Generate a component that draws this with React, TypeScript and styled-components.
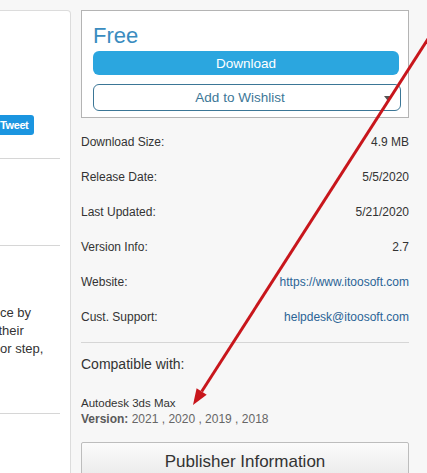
import React from "react";
import styled, { createGlobalStyle } from "styled-components";

const Global = createGlobalStyle`
  html, body { margin: 0; padding: 0; overflow: hidden; background: #f7f7f7; }
  body { font-family: "Liberation Sans", Arial, sans-serif; color: #333; }
  * { box-sizing: border-box; }
`;

const Page = styled.div`
  position: relative;
  display: flex;
  align-items: stretch;
  gap: 10px;
  padding-top: 10px;
  width: 427px;
  min-height: 473px;
`;

/* ---------- left card ---------- */
const LeftCard = styled.aside`
  flex: none;
  width: 71px;
  min-height: 520px;
  background: #fff;
  border: 1px solid #dcdcdc;
  border-left: none;
  border-radius: 0 4px 0 0;
  padding-right: 10px;
  display: flex;
  flex-direction: column;
`;

const SocialRow = styled.div`
  margin-top: 104px;
  display: flex;
`;

const TweetButton = styled.a`
  display: inline-flex;
  align-items: center;
  gap: 3px;
  height: 20px;
  margin-left: -20px;
  padding: 0 6px 0 5px;
  background: #1b95e0;
  color: #fff;
  border-radius: 3px;
  font: bold 11px "Liberation Sans", Arial, sans-serif;
  letter-spacing: -0.4px;
  text-decoration: none;
`;

const Divider = styled.hr<{ $top: number }>`
  margin: ${(p) => p.$top}px 0 0;
  border: none;
  border-top: 1px solid #d6d6d6;
  height: 0;
  width: 100%;
`;

const Para = styled.div`
  margin-top: 58px;
  font-size: 13px;
  line-height: 18px;
  color: #333;
`;

const ParaLine = styled.div<{ $shift?: number }>`
  white-space: nowrap;
  margin-left: ${(p) => p.$shift ?? 0}px;
`;

/* ---------- right column ---------- */
const RightColumn = styled.main`
  flex: none;
  width: 328px;
  display: flex;
  flex-direction: column;
`;

const PriceBox = styled.section`
  background: #fff;
  border: 1px solid #b4b4b4;
  padding: 12px 7px 6px 11px;
  display: flex;
  flex-direction: column;
`;

const Price = styled.div`
  font-size: 22px;
  line-height: 26px;
  color: #3a8cbf;
`;

const DownloadButton = styled.button`
  margin: 2px 2px 0 0;
  height: 24px;
  border: none;
  border-radius: 6px;
  background: #2ba6df;
  color: #fff;
  font: 13.5px "Liberation Sans", Arial, sans-serif;
  cursor: pointer;
`;

const WishlistButton = styled.button`
  position: relative;
  margin-top: 9px;
  height: 27px;
  border: 1px solid #3b7696;
  border-radius: 6px;
  background: #fff;
  color: #3d7797;
  font: 13.5px "Liberation Sans", Arial, sans-serif;
  padding: 0 14px 0 0;
  cursor: pointer;
`;

const Caret = styled.span`
  position: absolute;
  right: 8px;
  top: 11px;
  width: 0;
  height: 0;
  border-left: 4px solid transparent;
  border-right: 4px solid transparent;
  border-top: 5px solid #555;
`;

const InfoList = styled.dl`
  margin: 6px 0 0;
  display: flex;
  flex-direction: column;
`;

const InfoRow = styled.div`
  height: 35px;
  display: flex;
  align-items: center;
  justify-content: space-between;
  font-size: 12px;
  color: #333;
`;

const Label = styled.dt`
  margin: 0;
`;

const Value = styled.dd`
  margin: 0;
`;

const LinkValue = styled.a`
  color: #2b6496;
  text-decoration: none;
`;

const CompatTitle = styled.div`
  margin-top: 11px;
  font-size: 14px;
  line-height: 20px;
  color: #333;
`;

const Product = styled.div`
  margin-top: 21px;
  font-size: 11.5px;
  line-height: 16px;
  color: #333;
`;

const Versions = styled.div`
  font-size: 12px;
  line-height: 16px;
  color: #666;
  b { color: #5a5a5a; }
`;

const PublisherButton = styled.button`
  margin-top: 15px;
  height: 40px;
  border: 1px solid #bdbdbd;
  border-radius: 2px;
  background: linear-gradient(#fbfbfb, #e8e8e8);
  color: #333;
  font: 17px "Liberation Sans", Arial, sans-serif;
  padding: 0;
`;

const Overlay = styled.svg`
  position: absolute;
  left: 0;
  top: 0;
  pointer-events: none;
`;

const rows: { label: string; value: string; link?: boolean }[] = [
  { label: "Download Size:", value: "4.9 MB" },
  { label: "Release Date:", value: "5/5/2020" },
  { label: "Last Updated:", value: "5/21/2020" },
  { label: "Version Info:", value: "2.7" },
  { label: "Website:", value: "https://www.itoosoft.com", link: true },
  { label: "Cust. Support:", value: "helpdesk@itoosoft.com", link: true },
];

export default function App() {
  return (
    <>
      <Global />
      <Page>
        <LeftCard>
          <SocialRow>
            <TweetButton href="#">
              <svg width="12" height="10" viewBox="0 0 24 20" fill="#fff">
                <path d="M24 2.4a9.8 9.8 0 0 1-2.8.8A4.9 4.9 0 0 0 23.3.4a9.9 9.9 0 0 1-3.1 1.2A4.9 4.9 0 0 0 11.8 6 14 14 0 0 1 1.7.9a4.9 4.9 0 0 0 1.5 6.6A4.9 4.9 0 0 1 1 6.9v.1a4.9 4.9 0 0 0 3.9 4.8 4.9 4.9 0 0 1-2.2.1 4.9 4.9 0 0 0 4.6 3.4A9.9 9.9 0 0 1 0 17.3 14 14 0 0 0 7.5 19.5c9.1 0 14-7.5 14-14v-.6A10 10 0 0 0 24 2.4z" />
              </svg>
              Tweet
            </TweetButton>
          </SocialRow>
          <Divider $top={23} />
          <Divider $top={86} />
          <Para>
            <ParaLine>ce by</ParaLine>
            <ParaLine $shift={-1.5}>their</ParaLine>
            <ParaLine>or step,</ParaLine>
          </Para>
          <Divider $top={55} />
        </LeftCard>

        <RightColumn>
          <PriceBox>
            <Price>Free</Price>
            <DownloadButton>Download</DownloadButton>
            <WishlistButton>
              Add to Wishlist
              <Caret />
            </WishlistButton>
          </PriceBox>

          <InfoList>
            {rows.map((r) => (
              <InfoRow key={r.label}>
                <Label>{r.label}</Label>
                <Value>
                  {r.link ? <LinkValue href="#">{r.value}</LinkValue> : r.value}
                </Value>
              </InfoRow>
            ))}
          </InfoList>

          <Divider $top={8} />
          <CompatTitle>Compatible with:</CompatTitle>
          <Product>Autodesk 3ds Max</Product>
          <Versions>
            <b>Version:</b> 2021 , 2020 , 2019 , 2018
          </Versions>
          <PublisherButton>Publisher Information</PublisherButton>
        </RightColumn>

        <Overlay width="427" height="473" viewBox="0 0 427 473">
          <line x1="453" y1="0" x2="201.7" y2="391.5" stroke="#c8161c" strokeWidth="3" />
          <polygon points="193,405 206.7,394.7 196.6,388.2" fill="#c8161c" />
        </Overlay>
      </Page>
    </>
  );
}
